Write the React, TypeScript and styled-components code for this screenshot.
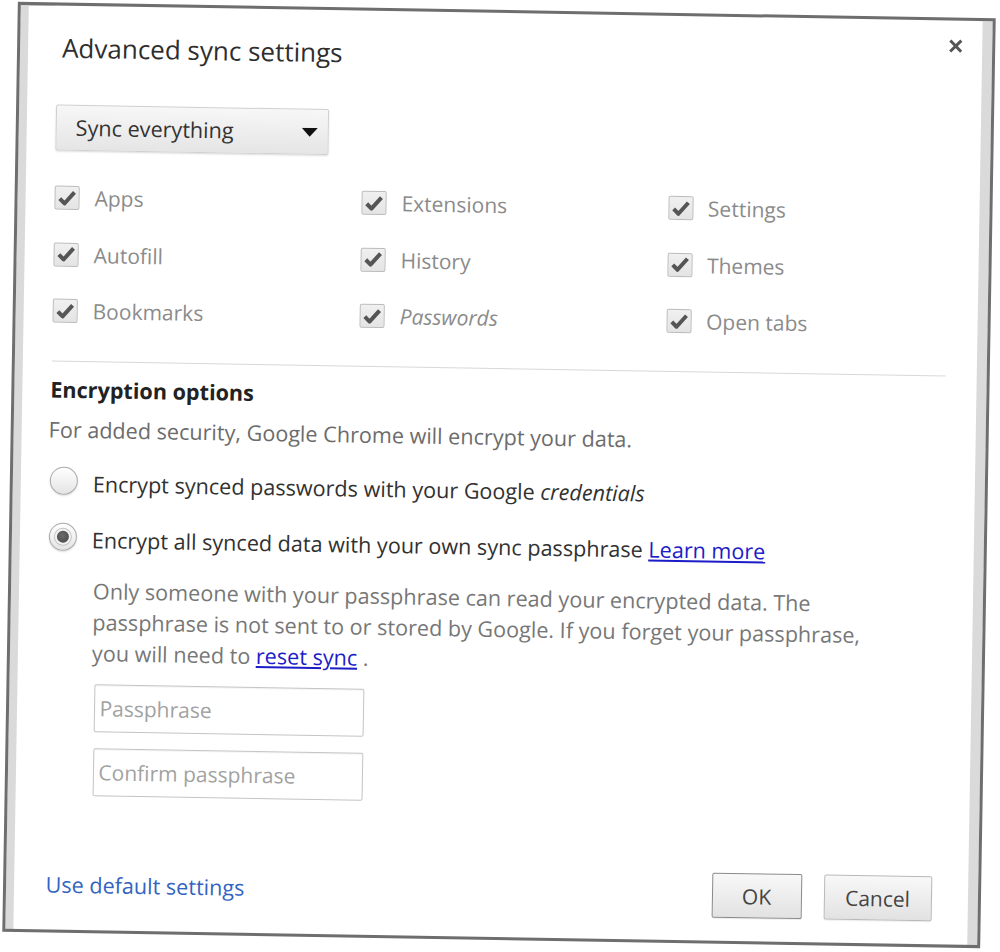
import React from 'react';
import styled, { createGlobalStyle } from 'styled-components';

const GlobalStyle = createGlobalStyle`
  html, body {
    margin: 0;
    padding: 0;
    background: #fff;
  }
  body {
    font-family: 'Open Sans', 'Noto Sans', sans-serif;
  }
`;

const Page = styled.div`
  width: 1000px;
  height: 952px;
  box-sizing: border-box;
  padding: 10px 0 0 10px;
  overflow: hidden;
`;

const Dialog = styled.div`
  box-sizing: border-box;
  width: 978px;
  height: 930px;
  display: flex;
  flex-direction: column;
  padding: 0 41px 23px 37px;
  background: #fff;
  border: 3px solid #6e6e6e;
  box-shadow: inset 8px 0 0 #dadada, inset -10px 0 0 #dadada;
  transform: rotate(0.96deg);
  font-size: 21.6px;
  color: #333;
`;

const Header = styled.div`
  display: flex;
  justify-content: space-between;
  align-items: flex-start;
  padding-top: 15px;
`;

const Title = styled.h1`
  margin: 8.5px 0 0 5px;
  font-size: 26px;
  line-height: 36px;
  font-weight: 400;
  color: #2e2e2e;
`;

const CloseButton = styled.button`
  width: 20px;
  height: 20px;
  margin-right: -14px;
  padding: 0;
  border: 0;
  background: none;
  display: flex;
  align-items: center;
  justify-content: center;
`;

const Select = styled.div`
  margin-top: 39.7px;
  width: 273px;
  height: 46px;
  box-sizing: border-box;
  display: flex;
  align-items: center;
  justify-content: space-between;
  padding: 0 10px 0 19px;
  border: 1px solid #d0d0d0;
  border-radius: 2px;
  background: linear-gradient(#f7f7f7, #e5e5e5);
  box-shadow: 0 1px 2px rgba(0, 0, 0, 0.14);
  color: #333;
  line-height: 28px;
`;

const Options = styled.div`
  margin-top: 31px;
  display: grid;
  grid-template-columns: 307px 306.5px 1fr;
  grid-auto-rows: 32px;
  row-gap: 24.5px;
  font-size: 21px;
`;

const OptionRow = styled.label`
  display: flex;
  align-items: center;
  gap: 15px;
`;

const Box = styled.span`
  width: 25px;
  height: 24px;
  box-sizing: border-box;
  border: 1px solid #bababa;
  border-radius: 2px;
  background: linear-gradient(#f0f0f0, #e4e4e4);
  display: flex;
  align-items: center;
  justify-content: center;
  flex: none;
`;

const OptionLabel = styled.span<{ $italic?: boolean }>`
  line-height: 28px;
  color: #8b8b8b;
  font-style: ${(p) => (p.$italic ? 'italic' : 'normal')};
`;

const Divider = styled.div`
  margin-top: 34px;
  height: 1px;
  background: #d8d8d8;
`;

const Heading = styled.h2`
  margin: 14px 0 0 -1px;
  font-size: 21.6px;
  line-height: 28px;
  font-weight: 700;
  color: #222;
`;

const Intro = styled.p`
  margin: 12px 0 0 -2px;
  line-height: 28px;
  color: #6c6c6c;
`;

const RadioRow = styled.label<{ $first?: boolean }>`
  display: flex;
  align-items: flex-start;
  gap: 15px;
  margin-top: ${(p) => (p.$first ? '22.9px' : '25px')};
`;

const Radio = styled.span<{ $checked?: boolean }>`
  width: 28px;
  height: 28px;
  box-sizing: border-box;
  flex: none;
  border-radius: 50%;
  border: 1px solid #a9a9a9;
  background: linear-gradient(#ffffff, #e4e4e4);
  box-shadow: 0 1px 2px rgba(0, 0, 0, 0.15);
  display: flex;
  align-items: center;
  justify-content: center;

  &::after {
    content: '';
    width: 12px;
    height: 12px;
    border-radius: 50%;
    background: radial-gradient(circle at 45% 40%, #6a6a6a, #454545);
    box-shadow: 0 0 0 2px #f2f2f2, 0 0 0 3px #c4c4c4;
    display: ${(p) => (p.$checked ? 'block' : 'none')};
  }
`;

const RadioLabel = styled.span`
  margin-top: 3px;
  line-height: 28px;
  color: #313131;
  white-space: nowrap;
`;

const Link = styled.a`
  color: #1c1cc8;
  text-decoration: underline;
`;

const Description = styled.p`
  margin: 21px 0 0 45px;
  line-height: 31px;
  color: #777;
  white-space: nowrap;
`;

const Input = styled.input`
  display: block;
  width: 270px;
  height: 48px;
  box-sizing: border-box;
  margin: 16px 0 0 47.5px;
  padding: 0 5px;
  border: 1px solid #c4c4c4;
  border-radius: 2px;
  box-shadow: inset 0 1px 1px rgba(0, 0, 0, 0.05);
  font: inherit;
  font-size: 21px;
  color: #333;
  outline: none;

  &::placeholder {
    color: #a2a2a2;
  }
`;

const Footer = styled.div`
  margin-top: auto;
  display: flex;
  align-items: center;
  justify-content: space-between;
`;

const DefaultLink = styled.a`
  margin-left: 2.5px;
  line-height: 28px;
  color: #3464c2;
  text-decoration: none;
`;

const Buttons = styled.div`
  display: flex;
  gap: 22px;
  margin-right: 5.4px;
`;

const Button = styled.button<{ $width: number; $primary?: boolean }>`
  width: ${(p) => p.$width}px;
  height: 45px;
  padding: 0;
  border: 1px solid ${(p) => (p.$primary ? '#8a8a8a' : '#b8b8b8')};
  border-radius: 2px;
  background: linear-gradient(#f8f8f8, #e2e2e2);
  box-shadow: 0 1px 1px rgba(0, 0, 0, 0.08);
  font: inherit;
  font-size: 21px;
  color: #444;
`;

const CheckMark = () => (
  <svg width="19" height="17" viewBox="0 0 19 17">
    <path
      d="M2.2 9 L7 13.8 L16.8 2.6"
      fill="none"
      stroke="#555"
      strokeWidth="4"
      strokeLinejoin="round"
    />
  </svg>
);

const options = [
  { label: 'Apps' },
  { label: 'Extensions' },
  { label: 'Settings' },
  { label: 'Autofill' },
  { label: 'History' },
  { label: 'Themes' },
  { label: 'Bookmarks' },
  { label: 'Passwords', italic: true },
  { label: 'Open tabs' },
];

const App = () => (
  <Page>
    <GlobalStyle />
    <Dialog>
      <Header>
        <Title>Advanced sync settings</Title>
        <CloseButton aria-label="Close">
          <svg width="15" height="15" viewBox="0 0 15 15">
            <path d="M2 2 L13 13 M13 2 L2 13" stroke="#555" strokeWidth="3" />
          </svg>
        </CloseButton>
      </Header>

      <Select>
        <span>Sync everything</span>
        <svg width="16" height="9" viewBox="0 0 16 9">
          <polygon points="0,0 16,0 8,9" fill="#111" />
        </svg>
      </Select>

      <Options>
        {options.map((o) => (
          <OptionRow key={o.label}>
            <Box>
              <CheckMark />
            </Box>
            <OptionLabel $italic={o.italic}>{o.label}</OptionLabel>
          </OptionRow>
        ))}
      </Options>

      <Divider />

      <Heading>Encryption options</Heading>
      <Intro>For added security, Google Chrome will encrypt your data.</Intro>

      <RadioRow $first>
        <Radio />
        <RadioLabel>
          Encrypt synced passwords with your Google <i>credentials</i>
        </RadioLabel>
      </RadioRow>
      <RadioRow>
        <Radio $checked />
        <RadioLabel>
          Encrypt all synced data with your own sync passphrase <Link href="#">Learn more</Link>
        </RadioLabel>
      </RadioRow>

      <Description>
        Only someone with your passphrase can read your encrypted data. The
        <br />
        passphrase is not sent to or stored by Google. If you forget your passphrase,
        <br />
        you will need to <Link href="#">reset sync</Link> .
      </Description>

      <Input placeholder="Passphrase" />
      <Input placeholder="Confirm passphrase" />

      <Footer>
        <DefaultLink href="#">Use default settings</DefaultLink>
        <Buttons>
          <Button $width={90} $primary>
            OK
          </Button>
          <Button $width={108}>Cancel</Button>
        </Buttons>
      </Footer>
    </Dialog>
  </Page>
);

export default App;
